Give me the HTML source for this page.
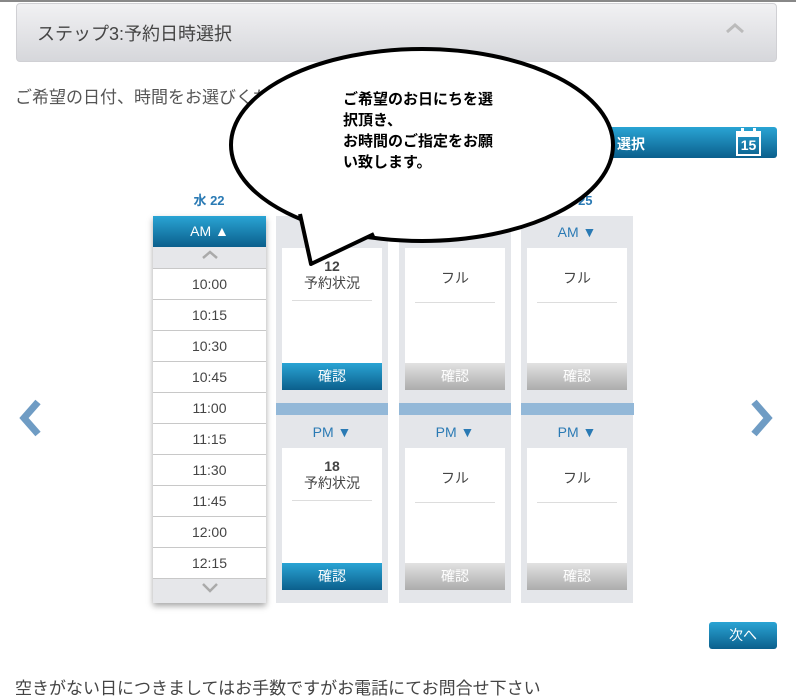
<!DOCTYPE html>
<html><head><meta charset="utf-8"><style>
*{margin:0;padding:0;box-sizing:border-box}
body{width:796px;height:699px;background:#fff;position:relative;overflow:hidden;font-family:"Liberation Sans","Noto Sans CJK JP",sans-serif;color:#444}
.a{position:absolute}
.hdr{left:16px;top:3px;width:761px;height:59px;border-radius:4px;background:linear-gradient(#f1f1f3,#d6d7db);border:1px solid #d0d0d4}
.blue{background:linear-gradient(#2aa4d4,#0b5f8c)}
.gray{background:linear-gradient(#e2e2e2,#acacac)}
.col{background:#e4e6ea;width:112px;top:216px;height:387px}
.card{background:#fff;left:6px;width:100px}
.btn{position:absolute;left:0;bottom:0;width:100px;height:27px;color:#fff;font-size:14px;text-align:center;line-height:27px}
.t{height:31px;border-top:1px solid #c8c8c8;background:#fff;text-align:center;line-height:30px;font-size:14px;color:#444}
.lbl{width:112px;text-align:center;font-size:14px;color:#2a7ab4}
.hr{position:absolute;left:10px;width:80px;top:52px;border-top:1px solid #ddd}
</style></head><body>
<div class="a" style="left:0;top:0;width:796px;height:2px;background:#888"></div>
<div class="a hdr"></div>
<div class="a" style="left:37px;top:20px;font-size:18px;color:#444">ステップ3:予約日時選択</div>
<svg class="a" style="left:725px;top:22px" width="20" height="12"><path d="M2 10 L10 3 L18 10" stroke="#bbb" stroke-width="3" fill="none"/></svg>
<div class="a" style="left:15px;top:83px;font-size:17px;color:#555">ご希望の日付、時間をお選びください</div>
<div class="a blue" style="left:590px;top:127px;width:187px;height:31px;border-radius:3px"></div>
<div class="a" style="left:617px;top:134px;color:#fff;font-size:14px;font-weight:bold">選択</div>
<div class="a" style="left:736px;top:131px;width:25px;height:25px;border:2px solid #fff;border-top-width:6px;color:#fff;font-size:14px;font-weight:bold;text-align:center;line-height:16px">15</div>
<div class="a" style="left:741px;top:128px;width:3px;height:6px;background:#fff"></div>
<div class="a" style="left:753px;top:128px;width:3px;height:6px;background:#fff"></div>
<div class="a lbl" style="left:153px;top:190px;font-weight:bold;font-size:13px">水 22</div>
<div class="a lbl" style="left:521px;top:190px;font-weight:bold;font-size:13px">木 25</div>
<div class="a" style="left:153px;top:216px;width:113px;height:387px;box-shadow:0 3px 6px rgba(0,0,0,.35);background:#e6e7ea">
<div class="blue" style="height:31px;color:#fff;text-align:center;line-height:31px;font-size:14px">AM ▲</div>
<div style="height:21px;text-align:center"><svg width="20" height="14"><path d="M3 11 L10 5 L17 11" stroke="#aaa" stroke-width="2.5" fill="none"/></svg></div>
<div class="t">10:00</div><div class="t">10:15</div><div class="t">10:30</div><div class="t">10:45</div><div class="t">11:00</div><div class="t">11:15</div><div class="t">11:30</div><div class="t">11:45</div><div class="t">12:00</div><div class="t">12:15</div>
<div style="height:25px;border-top:1px solid #c8c8c8;text-align:center"><svg width="20" height="18"><path d="M3 5 L10 12 L17 5" stroke="#aaa" stroke-width="2.5" fill="none"/></svg></div>
</div>
<div class="a col" style="left:276px"></div>
<div class="a col" style="left:399px"></div>
<div class="a col" style="left:521px"></div>
<div class="a lbl" style="left:521px;top:224px">AM ▼</div>
<div class="a" style="left:276px;top:403px;width:358px;height:12px;background:#93b8d8"></div>
<div class="a" style="left:388px;top:403px;width:11px;height:12px;background:#fff"></div>
<div class="a" style="left:511px;top:403px;width:10px;height:12px;background:#fff"></div>
<div class="a lbl" style="left:276px;top:424px">PM ▼</div>
<div class="a lbl" style="left:399px;top:424px">PM ▼</div>
<div class="a lbl" style="left:521px;top:424px">PM ▼</div>
<div class="a card" style="left:282px;top:248px;height:142px"><div style="text-align:center;font-size:14px;margin-top:10px;line-height:17px"><b>12</b><br>予約状況</div><div class="hr"></div><div class="btn blue">確認</div></div>
<div class="a card" style="left:405px;top:248px;height:142px"><div style="text-align:center;font-size:14px;margin-top:20px">フル</div><div class="hr" style="top:54px"></div><div class="btn gray">確認</div></div>
<div class="a card" style="left:527px;top:248px;height:142px"><div style="text-align:center;font-size:14px;margin-top:20px">フル</div><div class="hr" style="top:54px"></div><div class="btn gray">確認</div></div>
<div class="a card" style="left:282px;top:448px;height:142px"><div style="text-align:center;font-size:14px;margin-top:10px;line-height:17px"><b>18</b><br>予約状況</div><div class="hr"></div><div class="btn blue">確認</div></div>
<div class="a card" style="left:405px;top:448px;height:142px"><div style="text-align:center;font-size:14px;margin-top:20px">フル</div><div class="hr" style="top:54px"></div><div class="btn gray">確認</div></div>
<div class="a card" style="left:527px;top:448px;height:142px"><div style="text-align:center;font-size:14px;margin-top:20px">フル</div><div class="hr" style="top:54px"></div><div class="btn gray">確認</div></div>
<svg class="a" style="left:14px;top:398px" width="30" height="40"><path d="M24 4 L10 20 L24 36" stroke="#6f9cc4" stroke-width="7" fill="none"/></svg>
<svg class="a" style="left:748px;top:398px" width="30" height="40"><path d="M6 4 L20 20 L6 36" stroke="#6f9cc4" stroke-width="7" fill="none"/></svg>
<div class="a blue" style="left:709px;top:622px;width:68px;height:27px;border-radius:3px;color:#fff;font-size:14px;text-align:center;line-height:27px">次へ</div>
<div class="a" style="left:15px;top:674px;font-size:17px;color:#444">空きがない日につきましてはお手数ですがお電話にてお問合せ下さい</div>
<svg class="a" style="left:0;top:0" width="796" height="699">
<ellipse cx="422" cy="145" rx="191" ry="96" fill="#fff" stroke="#000" stroke-width="4"/>
<path d="M298 210 L311 264 L378 232 Z" fill="#fff"/>
<path d="M300 214 L311 264 L374 234" fill="none" stroke="#000" stroke-width="4" stroke-linejoin="round"/>
</svg>
<div class="a" style="left:343px;top:89px;font-size:15px;font-weight:bold;color:#000;line-height:21px;width:190px">ご希望のお日にちを選<br>択頂き、<br>お時間のご指定をお願<br>い致します。</div>
</body></html>
